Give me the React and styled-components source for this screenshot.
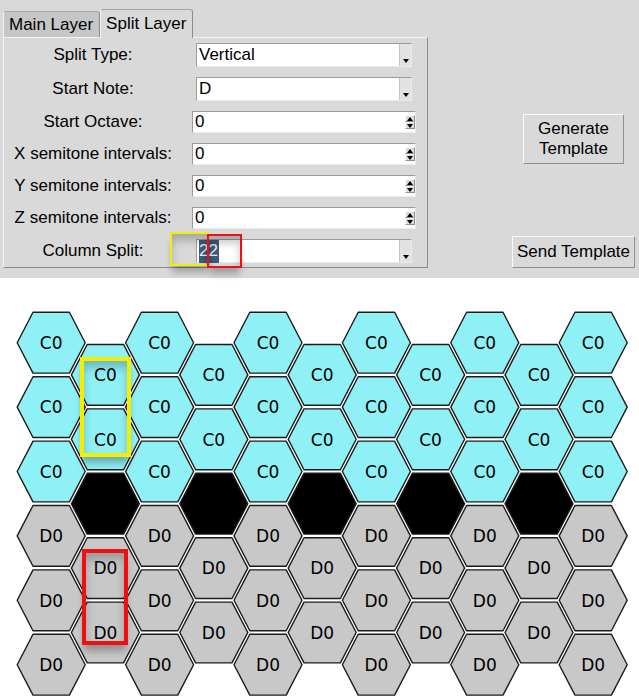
import React from 'react';
import styled, { createGlobalStyle } from 'styled-components';

const GlobalStyle = createGlobalStyle`
    body {
        margin: 0;
        background: #fff;
        font-family: "Liberation Sans", Arial, sans-serif;
    }
`;

const Page = styled.div`
    position: relative;
    width: 639px;
    height: 699px;
    overflow: hidden;
    background: #fff;
`;

const TopArea = styled.div`
    height: 278px;
    box-sizing: border-box;
    background: #d9d9d9;
    padding: 9px 0 0 3px;
    display: flex;
`;

const Notebook = styled.div`
    width: 425px;
    display: flex;
    flex-direction: column;
`;

const TabRow = styled.div`
    height: 28px;
    display: flex;
    align-items: flex-end;
`;

const Tab = styled.div`
    position: relative;
    z-index: ${p => (p.$active ? 2 : 1)};
    height: ${p => (p.$active ? 29 : 26)}px;
    margin-bottom: ${p => (p.$active ? -1 : 0)}px;
    box-sizing: border-box;
    padding: 0 6px 0 5px;
    display: flex;
    align-items: center;
    font-size: 17px;
    color: #000;
    background: ${p => (p.$active ? '#d9d9d9' : '#c6c6c6')};
    border: 1px solid;
    border-bottom: none;
    border-color: #a4a4a4 #8c8c8c #a4a4a4 #f4f4f4;
    border-radius: 3px 3px 0 0;
`;

const Panel = styled.div`
    height: 231px;
    box-sizing: border-box;
    border: 1px solid;
    border-color: #f4f4f4 #8c8c8c #8c8c8c #f4f4f4;
    padding: 5px 11px 4px 0;
`;

const Form = styled.div`
    display: grid;
    grid-template-columns: 178px 224px;
    column-gap: 10px;
    row-gap: 10px;
    align-items: center;
    justify-items: center;
`;

const Label = styled.div`
    font-size: 17px;
    color: #000;
    white-space: nowrap;
`;

const Field = styled.div`
    width: ${p => p.$w}px;
    height: ${p => p.$h}px;
    box-sizing: border-box;
    background: #fff;
    border: 1px solid;
    border-color: #9c9c9c #ececec #ececec #9c9c9c;
    display: flex;
`;

const FieldText = styled.div`
    flex: 1;
    display: flex;
    align-items: center;
    padding-left: 2px;
    font-size: 17px;
    color: #000;
`;

const Selected = styled.span`
    background: #3f5c7b;
    color: #eef3f8;
    padding: 1px 1px 2px 0;
`;

const DropButton = styled.div`
    width: 11px;
    background: #e2e2e2;
    border-left: 1px solid #c4c4c4;
    display: flex;
    align-items: flex-end;
    justify-content: center;
    padding-bottom: 3px;
`;

const SpinColumn = styled.div`
    width: 10px;
    padding: 3px 0;
    display: flex;
    flex-direction: column;
    gap: 0;
`;

const SpinButton = styled.div`
    flex: 1;
    box-sizing: border-box;
    background: #dcdcdc;
    border: 1px solid;
    border-color: #fafafa #8e8e8e #8e8e8e #fafafa;
    display: flex;
    align-items: center;
    justify-content: center;
`;

const Arrow = styled.span`
    width: 0;
    height: 0;
    border-left: 3px solid transparent;
    border-right: 3px solid transparent;
    ${p => (p.$up ? 'border-bottom: 4px solid #000;' : 'border-top: 4px solid #000;')}
`;

const SideColumn = styled.div`
    flex: 1;
    padding-left: 80px;
    display: flex;
    flex-direction: column;
    align-items: center;
`;

const Button = styled.div`
    width: ${p => p.$w}px;
    height: ${p => p.$h}px;
    margin-top: ${p => p.$top}px;
    box-sizing: border-box;
    background: #d9d9d9;
    border: 1px solid;
    border-color: #fbfbfb #8e8e8e #8e8e8e #fbfbfb;
    display: flex;
    align-items: center;
    justify-content: center;
    text-align: center;
    font-size: 17px;
    line-height: 20px;
    color: #000;
`;

const Board = styled.svg`
    display: block;
`;

const HexLabel = styled.text`
    font-family: "DejaVu Sans", sans-serif;
    font-size: 17px;
    fill: #000;
`;

const Marker = styled.div`
    position: absolute;
    left: ${p => p.$x}px;
    top: ${p => p.$y}px;
    width: ${p => p.$w}px;
    height: ${p => p.$h}px;
    box-sizing: border-box;
    border: ${p => p.$thick}px solid ${p => p.$color};
    box-shadow: inset 0 7px 9px rgba(0, 0, 0, 0.22), 0 8px 7px -2px rgba(0, 0, 0, 0.28);
    pointer-events: none;
`;

const Combo = ({ value, children }) => (
    <Field $w={216} $h={24}>
        <FieldText>{children || value}</FieldText>
        <DropButton><Arrow /></DropButton>
    </Field>
);

const Spin = ({ value }) => (
    <Field $w={224} $h={22}>
        <FieldText>{value}</FieldText>
        <SpinColumn>
            <SpinButton><Arrow $up /></SpinButton>
            <SpinButton><Arrow /></SpinButton>
        </SpinColumn>
    </Field>
);

// hex board geometry, measured off the screenshot
const X0 = 51.2;
const DX = 54.2;
const Y0 = 64.7;
const DY = 64.4;
const A = 34;
const B = 18.2;
const H = 30.4;

const hexPoints = (cx, cy) =>
    [
        [cx - A, cy], [cx - B, cy - H], [cx + B, cy - H],
        [cx + A, cy], [cx + B, cy + H], [cx - B, cy + H],
    ].map(p => p.join(',')).join(' ');

const buildCells = () => {
    const cells = [];
    for (let c = 0; c < 11; c++) {
        const odd = c % 2 === 1;
        const rows = odd ? 5 : 6;
        for (let r = 0; r < rows; r++) {
            const cx = X0 + c * DX;
            const cy = Y0 + r * DY + (odd ? DY / 2 : 0);
            let kind = 'c';
            if (odd && r === 2) kind = 'black';
            else if ((odd && r > 2) || (!odd && r > 2)) kind = 'd';
            cells.push({ key: `${c}-${r}`, cx, cy, kind });
        }
    }
    return cells;
};

const FILL = { c: '#8ff0f6', d: '#c8c8c8', black: '#000' };

const HexBoard = () => (
    <Board width="639" height="421" viewBox="0 0 639 421">
        {buildCells().map(cell => (
            <g key={cell.key}>
                <polygon
                    points={hexPoints(cell.cx, cell.cy)}
                    fill={FILL[cell.kind]}
                    stroke="#1c1c1c"
                    strokeWidth="1.4"
                    strokeLinejoin="round"
                />
                {cell.kind !== 'black' && (
                    <HexLabel x={cell.cx} y={cell.cy + 6.2} textAnchor="middle">
                        {cell.kind === 'c' ? 'C0' : 'D0'}
                    </HexLabel>
                )}
            </g>
        ))}
    </Board>
);

const App = () => (
    <Page>
        <GlobalStyle />
        <TopArea>
            <Notebook>
                <TabRow>
                    <Tab>Main Layer</Tab>
                    <Tab $active>Split Layer</Tab>
                </TabRow>
                <Panel>
                    <Form>
                        <Label>Split Type:</Label>
                        <Combo value="Vertical" />
                        <Label>Start Note:</Label>
                        <Combo value="D" />
                        <Label>Start Octave:</Label>
                        <Spin value="0" />
                        <Label>X semitone intervals:</Label>
                        <Spin value="0" />
                        <Label>Y semitone intervals:</Label>
                        <Spin value="0" />
                        <Label>Z semitone intervals:</Label>
                        <Spin value="0" />
                        <Label>Column Split:</Label>
                        <Combo><Selected>22</Selected></Combo>
                    </Form>
                </Panel>
            </Notebook>
            <SideColumn>
                <Button $w={101} $h={50} $top={105}>Generate<br />Template</Button>
                <Button $w={123} $h={32} $top={72}>Send Template</Button>
            </SideColumn>
        </TopArea>
        <HexBoard />

        <Marker $x={170} $y={232} $w={39} $h={34} $thick={2} $color="#f4ee00" />
        <Marker $x={207} $y={234} $w={35} $h={34} $thick={2} $color="#ee1010" />
        <Marker $x={80} $y={357} $w={51} $h={100} $thick={4} $color="#f4ee00" />
        <Marker $x={82} $y={549} $w={46} $h={96} $thick={4} $color="#ee1010" />
    </Page>
);

export default App;
